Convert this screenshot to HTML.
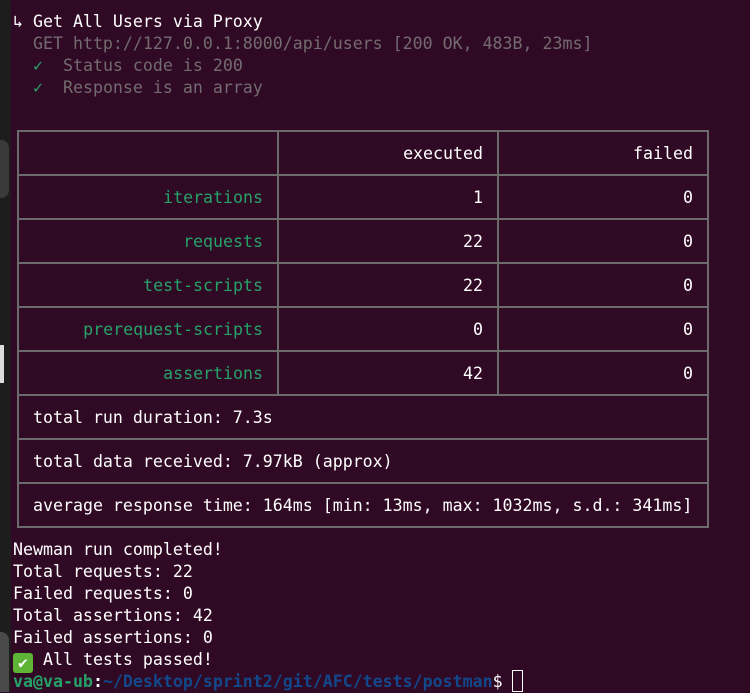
<!DOCTYPE html><html><head><style>
body{margin:0;width:750px;height:692px;background:#300a24;overflow:hidden;position:relative;font-family:"DejaVu Sans Mono","Liberation Mono",monospace;font-size:16.6px;color:#fff}
.t{position:absolute;white-space:pre;line-height:22px;margin-top:1px}
.g{color:#736b70}.gr{color:#26a269}
.strip{position:absolute;left:0;top:0;width:11px;height:692px;background:#1d1d1d}
.h{position:absolute;background:#6b6b6b}
.c{position:absolute;white-space:pre;line-height:44px;text-align:right;margin-top:1px}
</style></head><body>
<div class="strip"></div>
<div style="position:absolute;left:0;top:140px;width:9px;height:58px;background:#3a3a3a;border-radius:0 8px 8px 0"></div>
<div style="position:absolute;left:0;top:345px;width:4px;height:38px;background:#ddd"></div>
<div style="position:absolute;left:0;top:632px;width:9px;height:60px;background:#4a4a4a;border-radius:0 8px 0 0"></div>
<div class="t" style="left:13px;top:10px">↳ Get All Users via Proxy</div>
<div class="t g" style="left:33px;top:32px">GET http://127.0.0.1:8000/api/users [200 OK, 483B, 23ms]</div>
<div class="t" style="left:33px;top:54px"><span class="gr">✓</span><span class="g">  Status code is 200</span></div>
<div class="t" style="left:33px;top:76px"><span class="gr">✓</span><span class="g">  Response is an array</span></div>

<div class="h" style="left:17px;top:130px;width:692px;height:2px"></div>
<div class="h" style="left:17px;top:526px;width:692px;height:2px"></div>
<div class="h" style="left:17px;top:130px;width:2px;height:398px"></div>
<div class="h" style="left:707px;top:130px;width:2px;height:398px"></div>
<div class="h" style="left:277px;top:130px;width:2px;height:266px"></div>
<div class="h" style="left:497px;top:130px;width:2px;height:266px"></div>
<div class="h" style="left:17px;top:174px;width:692px;height:2px"></div>
<div class="h" style="left:17px;top:218px;width:692px;height:2px"></div>
<div class="h" style="left:17px;top:262px;width:692px;height:2px"></div>
<div class="h" style="left:17px;top:306px;width:692px;height:2px"></div>
<div class="h" style="left:17px;top:350px;width:692px;height:2px"></div>
<div class="h" style="left:17px;top:394px;width:692px;height:2px"></div>
<div class="h" style="left:17px;top:438px;width:692px;height:2px"></div>
<div class="h" style="left:17px;top:482px;width:692px;height:2px"></div>

<div class="c" style="left:279px;width:204px;top:131px">executed</div>
<div class="c" style="left:499px;width:194px;top:131px">failed</div>

<div class="c gr" style="left:19px;width:244px;top:175px">iterations</div>
<div class="c" style="left:279px;width:204px;top:175px">1</div>
<div class="c" style="left:499px;width:194px;top:175px">0</div>
<div class="c gr" style="left:19px;width:244px;top:219px">requests</div>
<div class="c" style="left:279px;width:204px;top:219px">22</div>
<div class="c" style="left:499px;width:194px;top:219px">0</div>
<div class="c gr" style="left:19px;width:244px;top:263px">test-scripts</div>
<div class="c" style="left:279px;width:204px;top:263px">22</div>
<div class="c" style="left:499px;width:194px;top:263px">0</div>
<div class="c gr" style="left:19px;width:244px;top:307px">prerequest-scripts</div>
<div class="c" style="left:279px;width:204px;top:307px">0</div>
<div class="c" style="left:499px;width:194px;top:307px">0</div>
<div class="c gr" style="left:19px;width:244px;top:351px">assertions</div>
<div class="c" style="left:279px;width:204px;top:351px">42</div>
<div class="c" style="left:499px;width:194px;top:351px">0</div>

<div class="t" style="left:33px;top:406px">total run duration: 7.3s</div>
<div class="t" style="left:33px;top:450px">total data received: 7.97kB (approx)</div>
<div class="t" style="left:33px;top:494px">average response time: 164ms [min: 13ms, max: 1032ms, s.d.: 341ms]</div>

<div class="t" style="left:13px;top:538px">Newman run completed!</div>
<div class="t" style="left:13px;top:560px">Total requests: 22</div>
<div class="t" style="left:13px;top:582px">Failed requests: 0</div>
<div class="t" style="left:13px;top:604px">Total assertions: 42</div>
<div class="t" style="left:13px;top:626px">Failed assertions: 0</div>
<div class="t" style="left:13px;top:648px"><span style="display:inline-block;width:20px;height:20px;background:#5fb336;color:#fff;border-radius:3px;text-align:center;line-height:20px;font-size:16px;vertical-align:-3px">✔</span> All tests passed!</div>
<div class="t" style="left:13px;top:670px;font-weight:bold"><span style="color:#26a269">va@va-ub</span>:<span style="color:#12488b">~/Desktop/sprint2/git/AFC/tests/postman</span><span style="font-weight:normal">$ </span></div>
<div style="position:absolute;left:512px;top:670px;width:9px;height:20px;border:1px solid #fff"></div>
</body></html>
